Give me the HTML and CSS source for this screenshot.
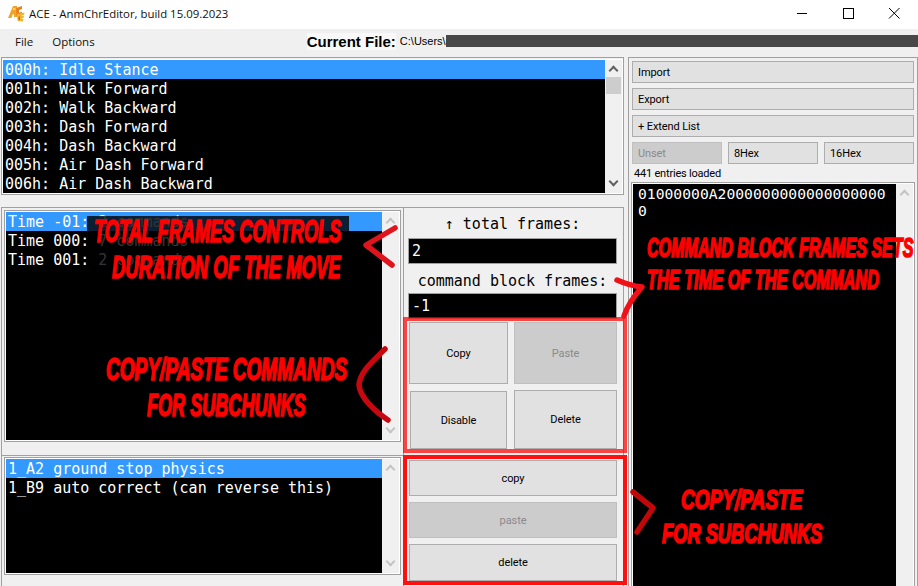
FILE: index.html
```html
<!DOCTYPE html>
<html>
<head>
  <meta charset="UTF-8">
  <title>ACE - AnmChrEditor</title>
  <link rel="stylesheet" href="styles.css">
</head>
<body>
<div id="window">
  <div class="titlebar">
    <svg class="logo" width="17" height="17" viewBox="0 0 17 17">
      <path d="M0 13 L5 1 L9 1 L9 12 L6 12 L6 9.500 L4.500 9.500 L3.500 13 Z" fill="#f0a526"/>
      <path d="M8 3 L14 1 L14 4 L11 5 L11 7.500 L14 7 L14 10 L8.500 11 Z" fill="#e8801c"/>
      <path d="M9 9 L16.500 7.500 L16 10 L12.500 11 L16 11 L15.500 13 L12.500 13.500 L15.500 14 L15 16.500 L9.500 16 Z" fill="#f4b52e"/>
      <path d="M10.500 11.500 L12 11.500 L12 15 L10.500 15 Z" fill="#d9601a"/>
      <path d="M5 3 L7.500 3 L7.500 5 L5 5 Z" fill="#ffd060"/>
    </svg>
    <span class="title">ACE - AnmChrEditor, build 15.09.2023</span>
    <div class="winbtns">
      <svg width="46" height="29" viewBox="0 0 46 29"><path d="M18 13.500 H28" stroke="#000" fill="none"/></svg>
      <svg width="46" height="29" viewBox="0 0 46 29"><rect x="18.500" y="8.500" width="10" height="10" stroke="#000" fill="none"/></svg>
      <svg width="46" height="29" viewBox="0 0 46 29"><path d="M18 8 L28.500 18.500 M28.500 8 L18 18.500" stroke="#000" fill="none"/></svg>
    </div>
  </div>

  <div class="menubar">
    <span class="menuitem">File</span>
    <span class="menuitem">Options</span>
    <div class="current">
      <b>Current File:</b>
      <span class="path">C:\Users\</span>
      <div class="censor"></div>
    </div>
  </div>

  <div class="workspace">
    <div class="leftcol">
      <div class="frame topframe">
        <div class="listbox movelist">
          <div class="rows">
            <div class="row sel">000h: Idle Stance</div>
            <div class="row">001h: Walk Forward</div>
            <div class="row">002h: Walk Backward</div>
            <div class="row">003h: Dash Forward</div>
            <div class="row">004h: Dash Backward</div>
            <div class="row">005h: Air Dash Forward</div>
            <div class="row">006h: Air Dash Backward</div>
          </div>
          <div class="scroll">
            <span class="arrow up dark"></span>
            <div class="thumb"></div>
            <span class="arrow down dark"></span>
          </div>
        </div>
      </div>

      <div class="frame lowerframe">
        <div class="subpanes">
          <div class="subpane first">
            <div class="listbox boxed blocklist">
              <div class="rows">
                <div class="row sel">Time -01: 2 commands</div>
                <div class="row">Time 000: 7 commands</div>
                <div class="row">Time 001: 2 commands</div>
              </div>
              <div class="scroll">
                <span class="arrow up"></span>
                <span class="arrow down"></span>
              </div>
            </div>
          </div>
          <div class="subpane second">
            <div class="listbox boxed cmdlist">
              <div class="rows">
                <div class="row sel">1_A2 ground stop physics</div>
                <div class="row">1_B9 auto correct (can reverse this)</div>
              </div>
              <div class="scroll">
                <span class="arrow up"></span>
                <span class="arrow down"></span>
              </div>
            </div>
          </div>
        </div>

        <div class="controls">
          <div class="label first-label">↑ total frames:</div>
          <div class="field">2</div>
          <div class="label">command block frames:</div>
          <div class="field">-1</div>
          <div class="btngrid">
            <button>Copy</button>
            <button class="off">Paste</button>
            <button class="inset">Disable</button>
            <button>Delete</button>
          </div>
          <div class="btnstack">
            <button>copy</button>
            <button class="off">paste</button>
            <button>delete</button>
          </div>
        </div>
      </div>
    </div>

    <div class="frame rightcol">
      <button class="wide">Import</button>
      <button class="wide">Export</button>
      <button class="wide">+ Extend List</button>
      <div class="hexrow">
        <button class="off">Unset</button>
        <button>8Hex</button>
        <button>16Hex</button>
      </div>
      <div class="status">441 entries loaded</div>
      <div class="listbox boxed hexbox">
        <div class="hextext">01000000A20000000000000000000</div>
        <div class="scroll">
          <span class="arrow up"></span>
          <span class="arrow down"></span>
        </div>
      </div>
    </div>
  </div>

  <!-- annotations drawn over the screenshot -->
  <div class="shade"></div>
  <div class="redbox box1"></div>
  <div class="redbox box2"></div>

  <div class="note n1">Total frames controls</div>
  <div class="note n2">duration of the move</div>
  <div class="note n3">Copy/paste commands</div>
  <div class="note n4">for subchunks</div>
  <div class="note n5">Command block frames sets</div>
  <div class="note n6">the time of the command</div>
  <div class="note n7">Copy/paste</div>
  <div class="note n8">for subchunks</div>

  <svg class="scribble" width="918" height="586" viewBox="0 0 918 586">
    <path d="M395 228 L366 245 L392 265" stroke="#e0141c"/>
    <path d="M385 349 C372 362 360 372 359 385 C360 398 376 412 388 420" stroke="#c80810"/>
    <path d="M617 280 C626 284 632 286 642 287 C634 296 628 304 624 316" stroke="#f01018"/>
    <path d="M633 492 L653 508 L637 532" stroke="#c00808"/>
  </svg>
</div>
</body>
</html>
```

FILE: styles.css
```css
html, body {
  margin: 0;
  padding: 0;
}
body {
  width: 918px;
  height: 586px;
  overflow: hidden;
  background: #f0f0f0;
  font-family: Roboto, "Liberation Sans", sans-serif;
  font-size: 12px;
  color: #000;
}
#window {
  position: relative;
  width: 918px;
  height: 586px;
  overflow: hidden;
}

/* title + menu */
.titlebar {
  height: 29px;
  background: #fff;
  display: flex;
  align-items: center;
  padding-left: 8px;
}
.logo {
  margin-right: 4px;
  margin-top: -2px;
}
.title {
  font-family: "Open Sans", sans-serif;
  font-size: 11.4px;
  margin-top: -3px;
  color: #111;
}
.winbtns {
  margin-left: auto;
  display: flex;
  padding-right: 1px;
}
.winbtns svg {
  display: block;
}
.menubar {
  height: 28px;
  display: flex;
  align-items: flex-start;
  padding-left: 15px;
  box-sizing: border-box;
}
.menuitem {
  font-family: "Open Sans", sans-serif;
  font-size: 11.5px;
  line-height: 25px;
  margin-right: 19px;
  color: #111;
}
.current {
  margin-left: 193px;
  flex: 1;
  display: flex;
  align-items: center;
  height: 24px;
}
.current b {
  font-family: "Liberation Sans", sans-serif;
  font-size: 15px;
  white-space: nowrap;
  background: #f8f8f8;
}
.path {
  font-family: "Liberation Sans", sans-serif;
  font-size: 11px;
  margin-left: 4px;
  white-space: nowrap;
}
.censor {
  flex: 1;
  height: 12px;
  background: #484848;
}

/* main layout */
.workspace {
  display: flex;
  height: 529px;
}
.frame {
  border: 1px solid #a0a0a0;
  box-sizing: border-box;
}
.leftcol {
  width: 623px;
  margin-left: 1px;
  display: flex;
  flex-direction: column;
}
.topframe {
  height: 138px;
  padding-top: 1px;
  margin-bottom: 12px;
}
.lowerframe {
  height: 379px;
  display: flex;
  border-bottom: none;
}
.subpanes {
  width: 402px;
  border-right: 1px solid #a0a0a0;
  flex: none;
  box-sizing: border-box;
}
.subpane {
  padding: 2px 0 0 2px;
  box-sizing: border-box;
}
.subpane.first {
  height: 248px;
  border-bottom: 1px solid #a0a0a0;
}
.subpane.second {
  height: 130px;
  padding-top: 1px;
}
.rightcol {
  width: 290px;
  margin-left: 4px;
  padding: 3px 3px 0 3px;
  border-bottom: none;
}

/* lists */
.listbox {
  display: flex;
  border: 1px solid #fff;
  box-sizing: border-box;
  background: #fff;
}
.listbox.boxed {
  border-color: #a0a0a0;
  padding: 1px;
}
.rows {
  flex: 1;
  background: #000;
  color: #fff;
  font-family: "DejaVu Sans Mono", monospace;
  font-size: 15px;
  line-height: 19px;
  overflow: hidden;
}
.row {
  padding-left: 2px;
  height: 19px;
  line-height: 21px;
  white-space: nowrap;
}
.row.sel {
  background: #3399ff;
}
.scroll {
  width: 17px;
  flex: none;
  background: #f0f0f0;
  display: flex;
  flex-direction: column;
  align-items: center;
  justify-content: space-between;
  padding: 7px 0 8px;
  box-sizing: border-box;
}
.arrow {
  display: block;
  width: 7px;
  height: 7px;
  border-left: 2px solid #c4c4c4;
  border-top: 2px solid #c4c4c4;
  box-sizing: border-box;
}
.arrow.dark {
  border-color: #606060;
}
.arrow.up {
  transform: rotate(45deg);
}
.arrow.down {
  transform: rotate(225deg);
}
.thumb {
  width: 15px;
  height: 17px;
  background: #cdcdcd;
  margin-top: 3px;
}
.movelist {
  height: 135px;
}
.movelist .scroll {
  justify-content: flex-start;
}
.movelist .arrow.down {
  margin-top: auto;
}
.blocklist {
  width: 397px;
  height: 232px;
}
.cmdlist {
  width: 397px;
  height: 118px;
}

/* middle controls */
.controls {
  flex: 1;
  padding: 0 0 0 4px;
}
.label {
  font-family: "DejaVu Sans Mono", monospace;
  font-size: 15px;
  line-height: 19px;
  text-align: center;
  width: 209px;
  margin-top: 8px;
  margin-bottom: 2px;
}
.first-label {
  margin-top: 7px;
  margin-bottom: 4px;
}
.field {
  background: #000;
  color: #fff;
  border: 1px solid #a0a0a0;
  font-family: "DejaVu Sans Mono", monospace;
  font-size: 15px;
  line-height: 24px;
  height: 26px;
  box-sizing: border-box;
  padding-left: 3px;
  width: 209px;
}
button {
  font-family: Roboto, "Liberation Sans", sans-serif;
  font-size: 11px;
  letter-spacing: -0.1px;
  color: #000;
  background: #e1e1e1;
  border: 1px solid #adadad;
  padding: 0;
  box-sizing: border-box;
  display: block;
}
button.off {
  background: #cccccc;
  color: #8a8a8a;
  border-color: #bfbfbf;
}
.btngrid {
  display: grid;
  grid-template-columns: 99px 103px;
  grid-template-rows: 62px 59px;
  column-gap: 6px;
  row-gap: 6px;
  margin-top: 3px;
  margin-left: 1px;
}
.btngrid .inset {
  margin: 1px 1px 0;
}
.btnstack {
  display: flex;
  flex-direction: column;
  gap: 6px;
  margin-top: 11px;
  margin-left: 1px;
  width: 208px;
}
.btnstack button {
  height: 36px;
}
.btnstack button:last-child {
  height: 37px;
}

/* right column */
.wide {
  width: 282px;
  height: 22px;
  text-align: left;
  padding-left: 5px;
  margin-bottom: 5px;
}
.hexrow {
  display: flex;
  gap: 6px;
}
.hexrow button {
  width: 90px;
  height: 22px;
  text-align: left;
  padding-left: 5px;
}
.status {
  font-size: 11px;
  letter-spacing: -0.2px;
  line-height: 14px;
  margin: 3px 0 1px 2px;
  height: 14px;
}
.hexbox {
  height: 420px;
  width: 284px;
  margin-left: -1px;
}
.hextext {
  flex: 1;
  background: #000;
  color: #fff;
  font-family: "DejaVu Sans Mono", monospace;
  font-size: 14.7px;
  line-height: 17px;
  padding: 1px 5px 0;
  word-break: break-all;
}

/* annotations */
.shade {
  position: absolute;
  left: 87px;
  top: 216px;
  width: 262px;
  height: 64px;
  background: rgba(0, 0, 0, 0.8);
}
.redbox {
  position: absolute;
  left: 403px;
  width: 224px;
  box-sizing: border-box;
  border: 4px solid rgba(255, 0, 0, 0.72);
}
.box1 {
  top: 317px;
  height: 136px;
}
.box2 {
  top: 455px;
  height: 130px;
  border-color: #ff1010;
}
.note {
  position: absolute;
  font-family: "Liberation Sans", sans-serif;
  font-weight: bold;
  font-style: italic;
  text-transform: uppercase;
  color: #ff0000;
  -webkit-text-stroke: 1.6px #ff0000;
  white-space: nowrap;
  transform-origin: left top;
  line-height: 1;
}
.n1 { left: 94px; top: 216px; font-size: 31px; transform: scaleX(0.586); }
.n2 { left: 112px; top: 252px; font-size: 31px; transform: scaleX(0.596); }
.n3 { left: 106px; top: 354px; font-size: 31px; transform: scaleX(0.615); }
.n4 { left: 147px; top: 390px; font-size: 31px; transform: scaleX(0.583); }
.n5 { left: 647px; top: 235px; font-size: 27px; transform: scaleX(0.596); }
.n6 { left: 647px; top: 267px; font-size: 27px; transform: scaleX(0.604); }
.n7 { left: 681px; top: 487px; font-size: 27px; transform: scaleX(0.706); }
.n8 { left: 662px; top: 521px; font-size: 27px; transform: scaleX(0.677); }
.scribble {
  position: absolute;
  left: 0;
  top: 0;
  pointer-events: none;
}
.scribble path {
  fill: none;
  stroke-width: 5.5;
  stroke-linecap: round;
  stroke-linejoin: round;
}
```
